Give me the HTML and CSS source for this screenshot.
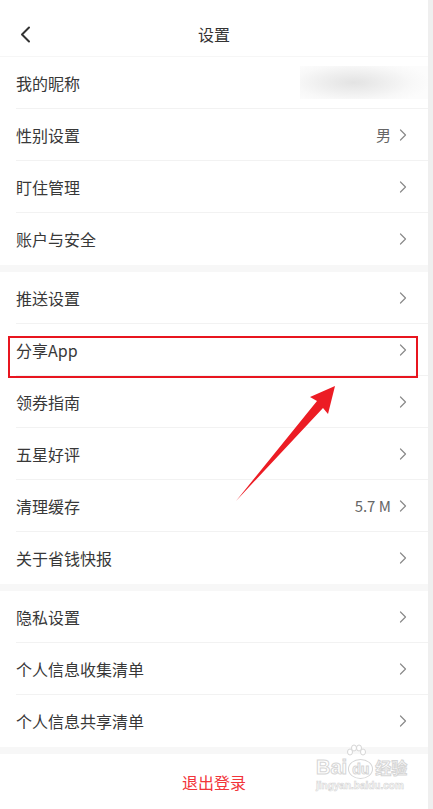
FILE: index.html
```html
<!DOCTYPE html>
<html lang="zh-CN">
<head>
    <meta charset="UTF-8">
    <meta name="viewport" content="width=device-width, initial-scale=1.0">
    <title>设置</title>
    <link rel="stylesheet" href="styles.css">
</head>
<body>
    <div class="screen">
        <div class="page">
            <div class="nav">
                <svg class="back" width="12" height="17" viewBox="0 0 12 17">
                    <path d="M10 1.5 L3 8.5 L10 15.5" fill="none" stroke="#333" stroke-width="2" stroke-linecap="round" stroke-linejoin="round"/>
                </svg>
                <div class="nav-title">设置</div>
            </div>

            <div class="group">
                <div class="row">
                    <span class="label">我的昵称</span>
                    <span class="blurred"></span>
                </div>
                <div class="row">
                    <span class="label">性别设置</span>
                    <span class="value">男</span>
                    <svg class="arrow" width="8" height="12" viewBox="0 0 8 12"><path d="M1.5 1 L6.5 6 L1.5 11" /></svg>
                </div>
                <div class="row">
                    <span class="label">盯住管理</span>
                    <svg class="arrow" width="8" height="12" viewBox="0 0 8 12"><path d="M1.5 1 L6.5 6 L1.5 11" /></svg>
                </div>
                <div class="row">
                    <span class="label">账户与安全</span>
                    <svg class="arrow" width="8" height="12" viewBox="0 0 8 12"><path d="M1.5 1 L6.5 6 L1.5 11" /></svg>
                </div>
            </div>

            <div class="group">
                <div class="row">
                    <span class="label">推送设置</span>
                    <svg class="arrow" width="8" height="12" viewBox="0 0 8 12"><path d="M1.5 1 L6.5 6 L1.5 11" /></svg>
                </div>
                <div class="row">
                    <span class="label">分享App</span>
                    <svg class="arrow" width="8" height="12" viewBox="0 0 8 12"><path d="M1.5 1 L6.5 6 L1.5 11" /></svg>
                </div>
                <div class="row">
                    <span class="label">领券指南</span>
                    <svg class="arrow" width="8" height="12" viewBox="0 0 8 12"><path d="M1.5 1 L6.5 6 L1.5 11" /></svg>
                </div>
                <div class="row">
                    <span class="label">五星好评</span>
                    <svg class="arrow" width="8" height="12" viewBox="0 0 8 12"><path d="M1.5 1 L6.5 6 L1.5 11" /></svg>
                </div>
                <div class="row">
                    <span class="label">清理缓存</span>
                    <span class="value">5.7 M</span>
                    <svg class="arrow" width="8" height="12" viewBox="0 0 8 12"><path d="M1.5 1 L6.5 6 L1.5 11" /></svg>
                </div>
                <div class="row">
                    <span class="label">关于省钱快报</span>
                    <svg class="arrow" width="8" height="12" viewBox="0 0 8 12"><path d="M1.5 1 L6.5 6 L1.5 11" /></svg>
                </div>
            </div>

            <div class="group">
                <div class="row">
                    <span class="label">隐私设置</span>
                    <svg class="arrow" width="8" height="12" viewBox="0 0 8 12"><path d="M1.5 1 L6.5 6 L1.5 11" /></svg>
                </div>
                <div class="row">
                    <span class="label">个人信息收集清单</span>
                    <svg class="arrow" width="8" height="12" viewBox="0 0 8 12"><path d="M1.5 1 L6.5 6 L1.5 11" /></svg>
                </div>
                <div class="row">
                    <span class="label">个人信息共享清单</span>
                    <svg class="arrow" width="8" height="12" viewBox="0 0 8 12"><path d="M1.5 1 L6.5 6 L1.5 11" /></svg>
                </div>
            </div>

            <div class="logout">退出登录</div>
        </div>
        <div class="scroll-strip"></div>

        <!-- annotation drawn on top of the screenshot -->
        <div class="highlight"></div>
        <svg class="pointer" width="433" height="809" viewBox="0 0 433 809">
            <polygon points="335,386 310,397 317,401 236,501 323,408 328,414" fill="#ec1c24"/>
        </svg>

        <div class="watermark">
            <svg class="wm-paw" width="20" height="14" viewBox="0 0 20 14">
                <g fill="#fff" stroke="#d6d6d6" stroke-width="1">
                    <ellipse cx="4" cy="8" rx="2.5" ry="3"/>
                    <ellipse cx="8" cy="4" rx="2.5" ry="3"/>
                    <ellipse cx="13" cy="4" rx="2.5" ry="3"/>
                    <ellipse cx="17" cy="8" rx="2.5" ry="3"/>
                </g>
            </svg>
            <div class="wm-logo">Bai<span class="wm-du">du</span><span class="wm-cn">经验</span></div>
            <div class="wm-url">jingyan.baidu.com</div>
        </div>
    </div>
</body>
</html>
```

FILE: styles.css
```css
* {
    margin: 0;
    padding: 0;
    box-sizing: border-box;
}

body {
    background: #fff;
    font-family: "Noto Sans CJK SC", "Noto Sans", sans-serif;
    color: #333;
}

.screen {
    position: relative;
    display: flex;
    width: 433px;
    height: 809px;
    overflow: hidden;
}

.page {
    width: 428px;
    background: #f7f7f7;
}

.scroll-strip {
    width: 5px;
    background: #efefef;
}

/* top bar */
.nav {
    height: 57px;
    padding-top: 12px;
    display: flex;
    align-items: center;
    position: relative;
    background: #fff;
    border-bottom: 1px solid #f6f6f6;
}

.back {
    position: absolute;
    left: 19px;
    top: 26px;
}

.nav-title {
    flex: 1;
    text-align: center;
    font-size: 16px;
    line-height: 45px;
    color: #333;
}

.group {
    background: #fff;
    margin-bottom: 7px;
}

.row {
    height: 52px;
    margin-left: 16px;
    padding-right: 21px;
    display: flex;
    align-items: center;
    border-bottom: 1px solid #f2f2f2;
}

.row:last-child {
    border-bottom: none;
}

.label {
    flex: 1;
    font-size: 16px;
    color: #383838;
}

.value {
    font-size: 15px;
    color: #666;
    margin-right: 8px;
}

.arrow path {
    fill: none;
    stroke: #8a8a8a;
    stroke-width: 1.2;
    stroke-linecap: round;
    stroke-linejoin: round;
}

.blurred {
    width: 128px;
    height: 33px;
    margin-right: -21px;
    background: radial-gradient(ellipse 60% 70% at 42% 50%, #e3e3e3 0%, #eeeeee 40%, #f8f8f8 75%, #fcfcfc 100%);
}

.logout {
    height: 55px;
    background: #fff;
    display: flex;
    align-items: center;
    justify-content: center;
    font-size: 16px;
    color: #f2353a;
}

/* annotation overlay */
.highlight {
    position: absolute;
    left: 8px;
    top: 336px;
    width: 410px;
    height: 42px;
    border: 2px solid #e8151f;
}

.pointer {
    position: absolute;
    left: 0;
    top: 0;
    pointer-events: none;
}

.watermark {
    position: absolute;
    left: 316px;
    top: 744px;
    color: #fff;
    font-family: "Liberation Sans", sans-serif;
}

.wm-paw {
    display: block;
    margin-left: 30px;
    margin-bottom: -3px;
}

.wm-logo {
    font-size: 20px;
    font-weight: bold;
    line-height: 24px;
    -webkit-text-stroke: 1px #d6d6d6;
    white-space: nowrap;
}

.wm-du {
    display: inline-block;
    font-size: 14px;
    border: 1px solid #d6d6d6;
    border-radius: 50%;
    padding: 0 3px;
    line-height: 18px;
    margin-left: 1px;
}

.wm-cn {
    font-family: "Noto Sans CJK SC", sans-serif;
    font-size: 16px;
    margin-left: 2px;
}

.wm-url {
    font-size: 10px;
    font-weight: bold;
    line-height: 14px;
    -webkit-text-stroke: 0.6px #d6d6d6;
}
```
